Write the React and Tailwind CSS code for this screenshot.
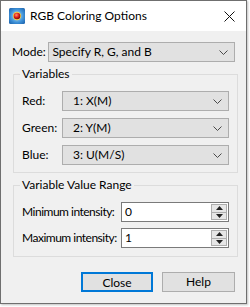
import React from "react";

const Chevron = () => (
    <svg width="9" height="5" viewBox="0 0 9 5" className="shrink-0">
        <path d="M0.5 0.5 L4.5 4.5 L8.5 0.5" fill="none" stroke="#4a4a4a" strokeWidth="1" />
    </svg>
);

const Select = ({ value, className, textClass }) => (
    <div className={`flex items-center justify-between h-[20px] bg-[#e1e1e1] border border-[#adadad] pr-[6px] ${className}`}>
        <span className={`text-[12px] text-black leading-none whitespace-nowrap ${textClass}`}>{value}</span>
        <Chevron />
    </div>
);

const Spin = ({ value }) => (
    <div className="flex shrink-0 items-center w-[108px] h-[20px] bg-white border border-[#7a7a7a]">
        <span className="flex-1 pl-[3px] text-[12px] leading-none text-black">{value}</span>
        <div className="flex flex-col w-[16px] h-[16px] mr-[1px] border border-[#adadad] bg-[#e6e6e6]">
            <div className="flex-1 flex items-center justify-center border-b border-[#adadad]">
                <svg width="7" height="4" viewBox="0 0 7 4"><path d="M3.5 0 L7 4 L0 4 Z" fill="#222" /></svg>
            </div>
            <div className="flex-1 flex items-center justify-center">
                <svg width="7" height="4" viewBox="0 0 7 4"><path d="M0 0 L7 0 L3.5 4 Z" fill="#222" /></svg>
            </div>
        </div>
    </div>
);

const Group = ({ title, className, children }) => (
    <div className={`relative border border-[#dcdcdc] ${className}`}>
        <span className="absolute left-[6px] top-[-8px] px-[2px] bg-[#f0f0f0] text-[12px] leading-[14px] text-black whitespace-nowrap">
            {title}
        </span>
        {children}
    </div>
);

const AppIcon = () => (
    <svg width="16" height="16" viewBox="0 0 16 16">
        <defs>
            <radialGradient id="bg" cx="50%" cy="50%" r="70%">
                <stop offset="0%" stopColor="#b9e3ff" />
                <stop offset="60%" stopColor="#3b8fd6" />
                <stop offset="100%" stopColor="#1b5ea8" />
            </radialGradient>
            <radialGradient id="ball" cx="40%" cy="35%" r="60%">
                <stop offset="0%" stopColor="#ff9a6a" />
                <stop offset="60%" stopColor="#e0201a" />
                <stop offset="100%" stopColor="#8a0c0c" />
            </radialGradient>
        </defs>
        <rect x="0" y="0" width="16" height="16" rx="1.5" fill="url(#bg)" />
        <circle cx="8" cy="8" r="4.2" fill="#f4d34a" />
        <circle cx="8" cy="8" r="3.3" fill="url(#ball)" />
    </svg>
);

const App = () => {
    return (
        <div className="w-[250px] h-[307px] bg-white" style={{ fontFamily: '"Segoe UI", Lato, sans-serif' }}>
            <div className="w-[247px] h-[304px] flex flex-col border border-[#6f6f6f] bg-[#f0f0f0] shadow-[1px_1px_2px_rgba(0,0,0,0.25)]">
                {/* title bar */}
                <div className="flex items-center h-[30px] bg-white pl-[8px] pr-[6px]">
                    <AppIcon />
                    <span className="ml-[5px] text-[12px] text-black whitespace-nowrap">RGB Coloring Options</span>
                    <svg width="11" height="11" viewBox="0 0 11 11" className="ml-auto mr-[5px]">
                        <path d="M0.5 0.5 L10.5 10.5 M10.5 0.5 L0.5 10.5" stroke="#111" strokeWidth="1" />
                    </svg>
                </div>

                <div className="flex flex-col px-[11px] pt-[11px]">
                    <div className="flex items-center">
                        <span className="w-[37px] text-[12px] text-black">Mode:</span>
                        <Select value="Specify R, G, and B" className="w-[189px]" textClass="pl-[3px]" />
                    </div>

                    <Group title="Variables" className="mt-[12px] ml-[1px] w-[225px] h-[99px] pt-[16px] pl-[8px] flex flex-col gap-[7px]">
                        {[
                            ["Red:", "1: X(M)"],
                            ["Green:", "2: Y(M)"],
                            ["Blue:", "3: U(M/S)"],
                        ].map(([label, val]) => (
                            <div key={label} className="flex items-center">
                                <span className="w-[40px] text-[12px] text-black">{label}</span>
                                <Select value={val} className="w-[167px]" textClass="pl-[10px]" />
                            </div>
                        ))}
                    </Group>

                    <Group title="Variable Value Range" className="mt-[12px] ml-[1px] w-[225px] h-[72px] pt-[16px] pl-[8px] flex flex-col gap-[6px]">
                        <div className="flex items-center">
                            <span className="w-[99px] shrink-0 text-[12px] tracking-[-0.5px] text-black whitespace-nowrap">Minimum intensity:</span>
                            <Spin value="0" />
                        </div>
                        <div className="flex items-center">
                            <span className="w-[99px] shrink-0 text-[12px] tracking-[-0.5px] text-black whitespace-nowrap">Maximum intensity:</span>
                            <Spin value="1" />
                        </div>
                    </Group>

                    <div className="flex justify-end gap-[9px] mt-[15px]">
                        <button className="w-[72px] h-[20px] bg-[#e1e1e1] border-2 border-[#0078d7] text-[12px] text-black">
                            Close
                        </button>
                        <button className="w-[73px] h-[20px] bg-[#e1e1e1] border border-[#adadad] text-[12px] text-black">
                            Help
                        </button>
                    </div>
                </div>
            </div>
        </div>
    );
};

export default App;
